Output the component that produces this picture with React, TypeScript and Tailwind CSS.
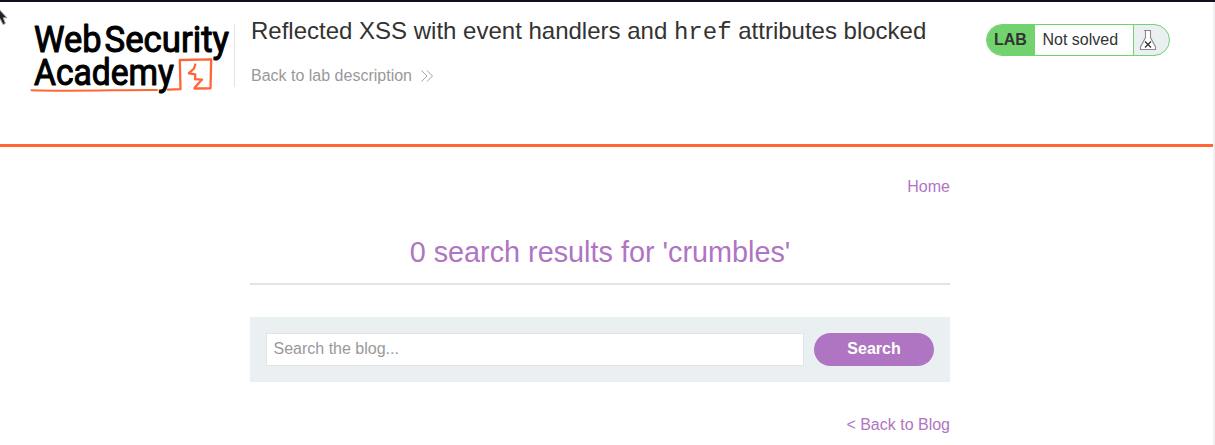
import React from "react";

function Logo() {
  return (
    <svg className="block h-[76px] w-[204px] overflow-visible" viewBox="28 20 204 76" role="img" aria-label="Web Security Academy">
      <g fill="#000" stroke="#000" strokeWidth="1.1" strokeLinejoin="round" fontFamily="Roboto, sans-serif" fontWeight="400" fontSize="37">
        <text x="34" y="52" textLength="67.5" lengthAdjust="spacingAndGlyphs">Web</text>
        <text x="104.5" y="52" textLength="124.5" lengthAdjust="spacingAndGlyphs">Security</text>
        <text x="34" y="84.8" textLength="140" lengthAdjust="spacingAndGlyphs">Academy</text>
      </g>
      <g fill="none" stroke="#ff6633" strokeLinejoin="round" strokeLinecap="round">
        <path d="M31.5 90.2 C70 91.5 120 89.8 157 90" strokeWidth="2" />
        <path d="M168 89.6 L180.5 89.2 L179.8 60 L211.2 59.3 L210.5 88.3 L194.5 88.5" strokeWidth="2.3" />
        <path d="M195.3 64.5 L194 68.5 L188.8 73.3 L195.3 74.3 L195 79.2 L202 79.6 L194.8 87.5" strokeWidth="2.3" />
      </g>
    </svg>
  );
}

function Flask() {
  return (
    <svg className="block h-[22px] w-[18px]" viewBox="0 0 18 22" fill="none">
      <path d="M5 1.5 H12 M6.5 2 V8.5 L1.5 18 V20.5 H16.5 V18 L11.5 8.5 V2" fill="#fff" stroke="#8a8a8a" strokeWidth="1.1" />
      <path d="M6 12.5 L12 18.5 M12 12.5 L6 18.5" stroke="#333" strokeWidth="1.3" />
    </svg>
  );
}

function LabStatus() {
  return (
    <div className="mt-[22px] mr-[43px] ml-auto flex h-8 w-[184px] overflow-hidden rounded-full border border-[#72d36e] bg-[#eaeff2] text-base leading-[30px] text-[#333332]">
      <span className="w-12 bg-[#72d36e] pl-[7px] font-bold">LAB</span>
      <span className="w-[99px] border-r border-[#72d36e] bg-white pl-[7.5px]">Not solved</span>
      <span className="pt-[4px] pl-[5px]"><Flask /></span>
    </div>
  );
}

export default function App() {
  return (
    <div className="relative flex h-[445px] w-[1215px] flex-col overflow-hidden border-t-2 border-[#11121c] bg-white font-['Liberation_Sans',Arial,sans-serif] text-base text-[#333332]">
      <svg className="absolute top-[5px] left-0 h-[20px] w-[9px]" viewBox="0 7 9 20">
        <path d="M-6 4 L7 17.8 H3.2 L5.4 23.4 L3 24.6 L0 18.5" fill="#222" stroke="#aaa" strokeWidth="1" />
      </svg>
      <div className="flex flex-1 flex-col border-r-2 border-[#f0f0f0]">
        <header className="flex h-[145px] shrink-0 items-start border-b-[3px] border-[#ff6633]">
          <div className="pt-[18px] pl-7"><Logo /></div>
          <div className="mt-[22px] ml-[2px] h-[63px] w-px bg-[#e4e4e4]" />
          <div className="pl-4">
            <h1 className="mt-[13px] text-2xl leading-8 whitespace-nowrap">
              Reflected XSS with event handlers and <code className="font-['Liberation_Mono',monospace]">href</code> attributes blocked
            </h1>
            <a className="mt-[15px] flex items-center text-base text-[#999]">
              Back to lab description
              <svg className="ml-[9px] h-3 w-3" viewBox="0 0 12 12" fill="none" stroke="#999" strokeWidth="0.9">
                <path d="M0.5 0.5 L6 6 L0.5 11.5 M6 0.5 L11.5 6 L6 11.5" />
              </svg>
            </a>
          </div>
          <LabStatus />
        </header>
        <main className="ml-[250px] flex w-[700px] flex-col text-[#af75c3]">
          <nav className="mt-7 text-right">Home</nav>
          <h2 className="mt-[33px] border-b-2 border-[#e4e4e4] pb-[11px] text-center text-[28.8px] leading-[40px]">0 search results for 'crumbles'</h2>
          <form className="mt-8 flex h-[65px] gap-[10px] bg-[#eaeff2] p-4">
            <input className="h-[33px] w-[538px] border border-[#e4e4e4] bg-white px-[6.5px] pb-[2px] text-base placeholder:text-[#999]" placeholder="Search the blog..." />
            <button type="button" className="h-[33px] w-[120px] rounded-full bg-[#af75c3] pb-px font-bold text-white">Search</button>
          </form>
          <a className="mt-[31px] text-right">&lt; Back to Blog</a>
        </main>
      </div>
    </div>
  );
}
